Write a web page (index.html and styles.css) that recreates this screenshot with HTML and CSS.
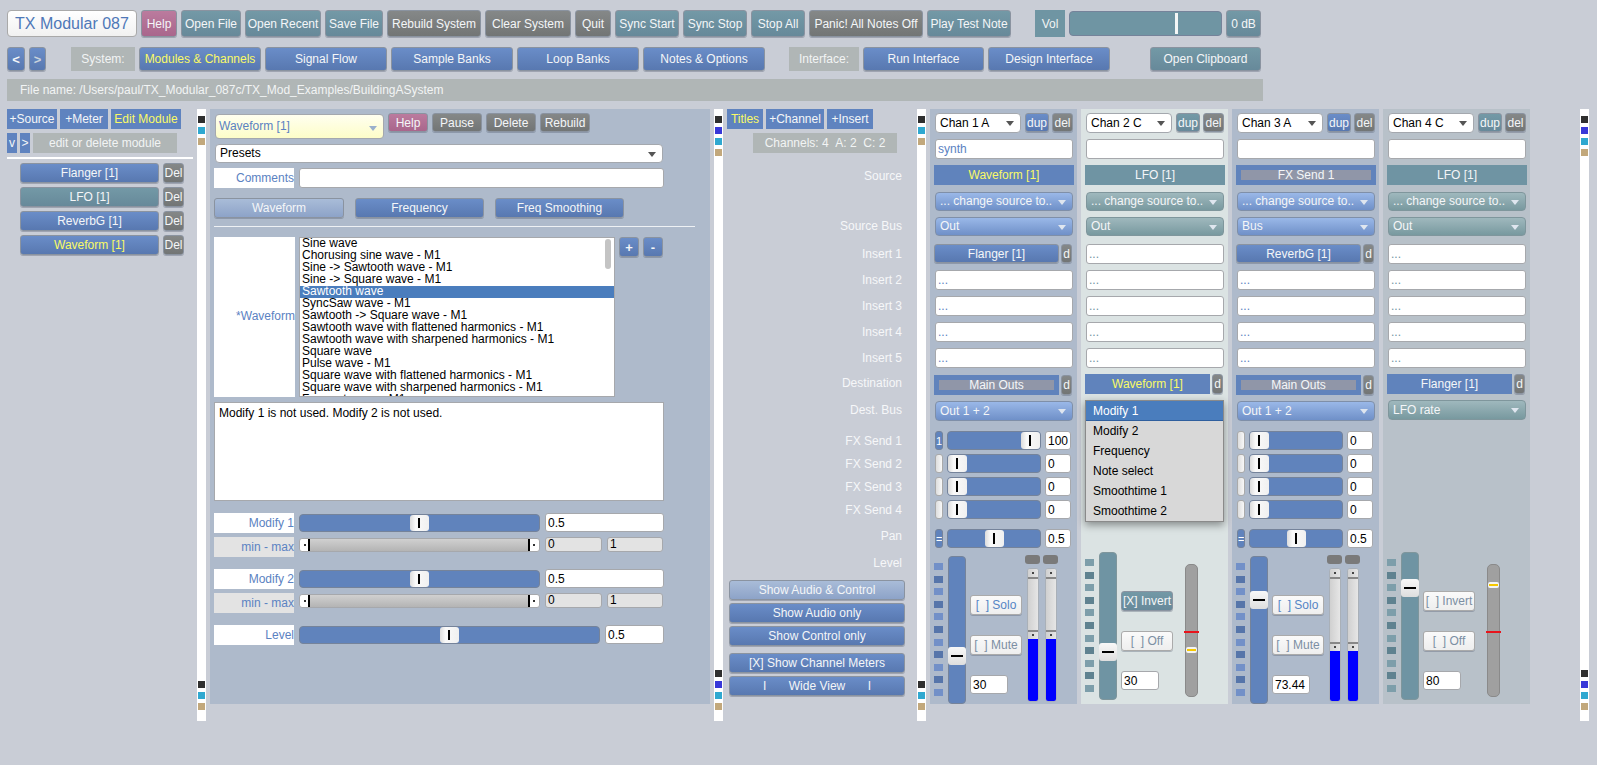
FILE: index.html
```html
<!DOCTYPE html>
<html lang="en">
<head>
    <meta charset="UTF-8">
    <title>TX Modular 087</title>
    <link rel="stylesheet" href="styles.css">
</head>
<body>
    <div class="page">
        <div class="toolbar">
            <div class="title">TX Modular 087</div>
            <button class="btn pink">Help</button>
            <button class="btn teal">Open File</button>
            <button class="btn teal">Open Recent</button>
            <button class="btn teal">Save File</button>
            <button class="btn grey">Rebuild System</button>
            <button class="btn grey">Clear System</button>
            <button class="btn grey">Quit</button>
            <button class="btn teal">Sync Start</button>
            <button class="btn teal">Sync Stop</button>
            <button class="btn teal">Stop All</button>
            <button class="btn grey">Panic! All Notes Off</button>
            <button class="btn teal">Play Test Note</button>
            <span></span>
            <div class="tag teal-tag">Vol</div>
            <div class="slider teal-slider"><i class="vol-thumb"></i></div>
            <button class="btn teal">0 dB</button>
        </div>

        <div class="navbar">
            <button class="btn blue big">&lt;</button>
            <button class="btn blue dim big">&gt;</button>
            <span></span>
            <div class="tag">System:</div>
            <button class="btn blue on">Modules &amp; Channels</button>
            <button class="btn blue">Signal Flow</button>
            <button class="btn blue">Sample Banks</button>
            <button class="btn blue">Loop Banks</button>
            <button class="btn blue">Notes &amp; Options</button>
            <span></span>
            <div class="tag">Interface:</div>
            <button class="btn blue">Run Interface</button>
            <button class="btn blue">Design Interface</button>
            <span></span>
            <button class="btn teal">Open Clipboard</button>
        </div>

        <div class="filebar">File name: /Users/paul/TX_Modular_087c/TX_Mod_Examples/BuildingASystem</div>

        <div class="workspace">
            <div class="modules">
                <div class="flat-row">
                    <div class="flat w50">+Source</div>
                    <div class="flat w48">+Meter</div>
                    <div class="flat w70 on">Edit Module</div>
                </div>
                <div class="flat-row second">
                    <div class="flat w10">v</div>
                    <div class="flat w10">&gt;</div>
                    <div class="tag w144">edit or delete module</div>
                </div>
                <div class="rule"></div>
                <div class="mod-row"><button class="btn blue">Flanger [1]</button><button class="btn grey">Del</button></div>
                <div class="mod-row"><button class="btn teal">LFO [1]</button><button class="btn grey">Del</button></div>
                <div class="mod-row"><button class="btn blue">ReverbG [1]</button><button class="btn grey">Del</button></div>
                <div class="mod-row"><button class="btn blue on">Waveform [1]</button><button class="btn grey">Del</button></div>
            </div>

            <div class="strip">
                <div class="swatches"><i class="c-black"></i><i class="c-cyan"></i><i class="c-tan"></i></div>
                <div class="swatches"><i class="c-black"></i><i class="c-cyan"></i><i class="c-tan"></i></div>
            </div>

            <div class="panel">
                <div class="panel-head">
                    <div class="select pale">Waveform [1]</div>
                    <button class="btn pink">Help</button>
                    <button class="btn grey">Pause</button>
                    <button class="btn grey">Delete</button>
                    <button class="btn grey">Rebuild</button>
                </div>
                <div class="select presets">Presets</div>
                <div class="comment-row">
                    <label class="plabel">Comments</label>
                    <input class="field" value="">
                </div>
                <div class="tabs">
                    <button class="btn blue pale-btn">Waveform</button>
                    <button class="btn blue">Frequency</button>
                    <button class="btn blue">Freq Smoothing</button>
                </div>
                <div class="panel-rule"></div>
                <div class="wave-row">
                    <label class="plabel">*Waveform</label>
                    <div class="listbox">
                        <div>Sine wave</div>
                        <div>Chorusing sine wave - M1</div>
                        <div>Sine -&gt; Sawtooth wave - M1</div>
                        <div>Sine -&gt; Square wave - M1</div>
                        <div class="picked">Sawtooth wave</div>
                        <div>SyncSaw wave - M1</div>
                        <div>Sawtooth -&gt; Square wave - M1</div>
                        <div>Sawtooth wave with flattened harmonics - M1</div>
                        <div>Sawtooth wave with sharpened harmonics - M1</div>
                        <div>Square wave</div>
                        <div>Pulse wave - M1</div>
                        <div>Square wave with flattened harmonics - M1</div>
                        <div>Square wave with sharpened harmonics - M1</div>
                        <div>Formant wave - M1</div>
                        <i class="scroll"></i>
                    </div>
                    <button class="btn blue big">+</button>
                    <button class="btn blue big">-</button>
                </div>
                <div class="notes">Modify 1 is not used. Modify 2 is not used.</div>

                <div class="param first">
                    <label class="plabel">Modify 1</label>
                    <div class="slider" style="--v:.5"><i class="thumb"></i></div>
                    <input class="field" value="0.5">
                </div>
                <div class="minmax">
                    <label class="plabel dim-label">min - max</label>
                    <div class="range"><div class="range-fill"></div></div>
                    <input class="field small" value="0">
                    <input class="field small" value="1">
                </div>
                <div class="param">
                    <label class="plabel">Modify 2</label>
                    <div class="slider" style="--v:.5"><i class="thumb"></i></div>
                    <input class="field" value="0.5">
                </div>
                <div class="minmax">
                    <label class="plabel dim-label">min - max</label>
                    <div class="range"><div class="range-fill"></div></div>
                    <input class="field small" value="0">
                    <input class="field small" value="1">
                </div>
                <div class="param level-param">
                    <label class="plabel">Level</label>
                    <div class="slider" style="--v:.5"><i class="thumb"></i></div>
                    <input class="field" value="0.5">
                </div>
            </div>

            <div class="strip">
                <div class="swatches"><i class="c-black"></i><i class="c-blue"></i><i class="c-cyan"></i><i class="c-tan"></i></div>
                <div class="swatches"><i class="c-black"></i><i class="c-blue"></i><i class="c-cyan"></i><i class="c-tan"></i></div>
            </div>

            <div class="titles">
                <div class="flat-row">
                    <div class="flat w36 on">Titles</div>
                    <div class="flat w58">+Channel</div>
                    <div class="flat w46">+Insert</div>
                </div>
                <div class="tag counts">Channels: 4 &nbsp;A: 2 &nbsp;C: 2</div>
                <div class="row-labels">
                    <span>Source</span>
                    <span>Source Bus</span>
                    <span>Insert 1</span>
                    <span>Insert 2</span>
                    <span>Insert 3</span>
                    <span>Insert 4</span>
                    <span>Insert 5</span>
                    <span>Destination</span>
                    <span>Dest. Bus</span>
                    <span>FX Send 1</span>
                    <span>FX Send 2</span>
                    <span>FX Send 3</span>
                    <span>FX Send 4</span>
                    <span>Pan</span>
                    <span>Level</span>
                </div>
                <div class="view-btns">
                    <button class="btn blue pale-btn">Show Audio &amp; Control</button>
                    <button class="btn blue">Show Audio only</button>
                    <button class="btn blue">Show Control only</button>
                    <button class="btn blue gap-btn">[X] Show Channel Meters</button>
                    <button class="btn blue wide-btn"><span>I</span><span>Wide View</span><span>I</span></button>
                </div>
            </div>

            <div class="strip">
                <div class="swatches"><i class="c-black"></i><i class="c-cyan"></i><i class="c-tan"></i></div>
                <div class="swatches"><i class="c-black"></i><i class="c-cyan"></i><i class="c-tan"></i></div>
            </div>

            <div class="channels">
                <!-- channel 1 -->
                <div class="channel audio">
                    <div class="chan-head">
                        <div class="select">Chan 1 A</div>
                        <button class="btn blue">dup</button>
                        <button class="btn grey">del</button>
                    </div>
                    <input class="field name blue-text" value="synth">
                    <div class="source blue-bar on">Waveform [1]</div>
                    <div class="select blue-select change">... change source to..</div>
                    <div class="select blue-select bus">Out</div>
                    <div class="insert first"><button class="btn blue">Flanger [1]</button><button class="btn grey">d</button></div>
                    <input class="field insert-in" value="...">
                    <input class="field insert-in" value="...">
                    <input class="field insert-in" value="...">
                    <input class="field insert-in" value="...">
                    <div class="dest"><div class="source blue-bar muted">Main Outs</div><button class="btn grey">d</button></div>
                    <div class="select blue-select dest-bus">Out 1 + 2</div>
                    <div class="fx first"><button class="toggle lit">1</button><div class="slider" style="--v:1"><i class="thumb"></i></div><input class="field" value="100"></div>
                    <div class="fx"><button class="toggle"></button><div class="slider" style="--v:0"><i class="thumb"></i></div><input class="field" value="0"></div>
                    <div class="fx"><button class="toggle"></button><div class="slider" style="--v:0"><i class="thumb"></i></div><input class="field" value="0"></div>
                    <div class="fx"><button class="toggle"></button><div class="slider" style="--v:0"><i class="thumb"></i></div><input class="field" value="0"></div>
                    <div class="fx pan"><button class="toggle lit">=</button><div class="slider" style="--v:.5"><i class="thumb"></i></div><input class="field" value="0.5"></div>
                    <div class="level">
                        <div class="leds"><i></i><i></i><i></i><i></i><i></i><i></i><i></i><i></i><i></i><i></i><i></i></div>
                        <div class="vslider" style="--v:.3"><i class="vthumb"></i></div>
                        <div class="level-btns">
                            <button class="btn plain solo">[ &nbsp;] Solo</button>
                            <button class="btn plain">[ &nbsp;] Mute</button>
                            <input class="field" value="30">
                        </div>
                        <div class="vu-pair">
                            <div class="vu"><u></u><div class="vu-bar"><div class="vu-range"></div><div class="vu-fill" style="height:62px"></div></div></div>
                            <div class="vu"><u></u><div class="vu-bar"><div class="vu-range"></div><div class="vu-fill" style="height:62px"></div></div></div>
                        </div>
                    </div>
                </div>

                <!-- channel 2 -->
                <div class="channel control light">
                    <div class="chan-head">
                        <div class="select">Chan 2 C</div>
                        <button class="btn teal">dup</button>
                        <button class="btn grey">del</button>
                    </div>
                    <input class="field name" value="">
                    <div class="source teal-bar">LFO [1]</div>
                    <div class="select teal-select change">... change source to..</div>
                    <div class="select teal-select bus">Out</div>
                    <input class="field insert-in first" value="...">
                    <input class="field insert-in" value="...">
                    <input class="field insert-in" value="...">
                    <input class="field insert-in" value="...">
                    <input class="field insert-in" value="...">
                    <div class="dest"><div class="source blue-bar on">Waveform [1]</div><button class="btn grey">d</button></div>
                    <div class="menu">
                        <div class="picked">Modify 1</div>
                        <div>Modify 2</div>
                        <div>Frequency</div>
                        <div>Note select</div>
                        <div>Smoothtime 1</div>
                        <div>Smoothtime 2</div>
                    </div>
                    <div class="level">
                        <div class="leds teal-leds"><i></i><i></i><i></i><i></i><i></i><i></i><i></i><i></i><i></i><i></i><i></i></div>
                        <div class="vslider teal-v" style="--v:.3"><i class="vthumb"></i></div>
                        <div class="level-btns">
                            <button class="btn teal">[X] Invert</button>
                            <button class="btn plain">[ &nbsp;] Off</button>
                            <input class="field" value="30">
                        </div>
                        <div class="fader"><i class="fader-zero"></i><i class="fader-thumb" style="top:82px"></i></div>
                    </div>
                </div>

                <!-- channel 3 -->
                <div class="channel audio">
                    <div class="chan-head">
                        <div class="select">Chan 3 A</div>
                        <button class="btn blue">dup</button>
                        <button class="btn grey">del</button>
                    </div>
                    <input class="field name" value="">
                    <div class="source blue-bar muted">FX Send 1</div>
                    <div class="select blue-select change">... change source to..</div>
                    <div class="select blue-select bus">Bus</div>
                    <div class="insert first"><button class="btn blue">ReverbG [1]</button><button class="btn grey">d</button></div>
                    <input class="field insert-in" value="...">
                    <input class="field insert-in" value="...">
                    <input class="field insert-in" value="...">
                    <input class="field insert-in" value="...">
                    <div class="dest"><div class="source blue-bar muted">Main Outs</div><button class="btn grey">d</button></div>
                    <div class="select blue-select dest-bus">Out 1 + 2</div>
                    <div class="fx first"><button class="toggle"></button><div class="slider" style="--v:0"><i class="thumb"></i></div><input class="field" value="0"></div>
                    <div class="fx"><button class="toggle"></button><div class="slider" style="--v:0"><i class="thumb"></i></div><input class="field" value="0"></div>
                    <div class="fx"><button class="toggle"></button><div class="slider" style="--v:0"><i class="thumb"></i></div><input class="field" value="0"></div>
                    <div class="fx"><button class="toggle"></button><div class="slider" style="--v:0"><i class="thumb"></i></div><input class="field" value="0"></div>
                    <div class="fx pan"><button class="toggle lit">=</button><div class="slider" style="--v:.5"><i class="thumb"></i></div><input class="field" value="0.5"></div>
                    <div class="level">
                        <div class="leds"><i></i><i></i><i></i><i></i><i></i><i></i><i></i><i></i><i></i><i></i><i></i></div>
                        <div class="vslider" style="--v:.7344"><i class="vthumb"></i></div>
                        <div class="level-btns">
                            <button class="btn plain solo">[ &nbsp;] Solo</button>
                            <button class="btn plain">[ &nbsp;] Mute</button>
                            <input class="field" value="73.44">
                        </div>
                        <div class="vu-pair">
                            <div class="vu"><u></u><div class="vu-bar"><div class="vu-range"></div><div class="vu-fill" style="height:50px"></div></div></div>
                            <div class="vu"><u></u><div class="vu-bar"><div class="vu-range"></div><div class="vu-fill" style="height:50px"></div></div></div>
                        </div>
                    </div>
                </div>

                <!-- channel 4 -->
                <div class="channel control slate">
                    <div class="chan-head">
                        <div class="select">Chan 4 C</div>
                        <button class="btn teal">dup</button>
                        <button class="btn grey">del</button>
                    </div>
                    <input class="field name" value="">
                    <div class="source teal-bar">LFO [1]</div>
                    <div class="select teal-select change">... change source to..</div>
                    <div class="select teal-select bus">Out</div>
                    <input class="field insert-in first" value="...">
                    <input class="field insert-in" value="...">
                    <input class="field insert-in" value="...">
                    <input class="field insert-in" value="...">
                    <input class="field insert-in" value="...">
                    <div class="dest"><div class="source blue-bar">Flanger [1]</div><button class="btn grey">d</button></div>
                    <div class="select teal-select dest-bus">LFO rate</div>
                    <div class="level">
                        <div class="leds teal-leds"><i></i><i></i><i></i><i></i><i></i><i></i><i></i><i></i><i></i><i></i><i></i></div>
                        <div class="vslider teal-v" style="--v:.8"><i class="vthumb"></i></div>
                        <div class="level-btns">
                            <button class="btn plain">[ &nbsp;] Invert</button>
                            <button class="btn plain">[ &nbsp;] Off</button>
                            <input class="field" value="80">
                        </div>
                        <div class="fader"><i class="fader-zero"></i><i class="fader-thumb" style="top:17px"></i></div>
                    </div>
                </div>
            </div>

            <div class="strip far">
                <div class="swatches"><i class="c-black"></i><i class="c-blue"></i><i class="c-cyan"></i><i class="c-tan"></i></div>
                <div class="swatches"><i class="c-black"></i><i class="c-blue"></i><i class="c-cyan"></i><i class="c-tan"></i></div>
            </div>
        </div>
    </div>
</body>
</html>
```
FILE: styles.css
```css
* { box-sizing: border-box; }
html, body { margin: 0; height: 100%; }
body { background: #c9cdd6; font-family: "Liberation Sans", Arial, sans-serif; font-size: 12px; overflow: hidden; }
.page { width: 1597px; height: 765px; padding: 10px 0 0 7px; }
button, input { font-family: inherit; font-size: 12px; margin: 0; }

/* top rows */
.toolbar { display: grid; height: 27px; column-gap: 4px; grid-template-columns: 130px 36px 60px 76px 58px 94px 86px 36px 64px 64px 54px 114px 84px 16px 30px 153px 35px; }
.navbar { display: grid; height: 24px; margin-top: 10px; column-gap: 4px; grid-template-columns: 18px 17px 17px 64px 122px 122px 122px 122px 122px 16px 70px 121px 122px 32px 111px; }
.filebar { width: 1256px; height: 22px; margin-top: 8px; padding-left: 13px; line-height: 22px; background: #b0b6b6; color: #f2f4f4; }
.title { background: linear-gradient(#fff, #f1f1f1); border: 1px solid #a9a9a9; border-radius: 4px; color: #4e78b8; font-size: 16px; line-height: 25px; text-align: center; }

/* buttons */
.btn { padding: 0; border: 1px solid #8a93a0; border-radius: 3px; color: #f4f6f8; white-space: nowrap; overflow: hidden; box-shadow: 0 1px 0 rgba(80,90,110,.35); }
.btn.blue { background: linear-gradient(#6a8dc8, #5878b0); }
.btn.teal { background: linear-gradient(#7399a6, #67899a); }
.btn.grey { background: linear-gradient(#858888, #727575); }
.btn.pink { background: linear-gradient(#bb7b9e, #a9668c); }
.btn.plain { background: linear-gradient(#fafafa, #eeeeee); color: #7c8fa3; border-color: #aaa; }
.btn.plain.solo { color: #5585c5; }
.btn.on, .flat.on, .source.on { color: #fafa66; }
.btn.big { font-size: 13px; font-weight: bold; }
.btn.dim { color: #c9d2dc; }
.btn.pale-btn { background: linear-gradient(#a9bcd8, #8da3c8); }
.tag { background: #b0b6b6; color: #f2f4f4; display: flex; align-items: center; justify-content: center; white-space: nowrap; }
.teal-tag { background: #6f95a3; }

/* sliders */
.slider { position: relative; background: #6083bc; border: 1px solid #75839a; border-radius: 4px; }
.slider .thumb { position: absolute; top: 0; bottom: 0; left: calc((100% - 19px) * var(--v)); width: 19px; background: linear-gradient(to right, #dcdcdc, #fafafa 30%, #f0f0f0); border-radius: 3px; }
.slider .thumb::after { content: ""; position: absolute; left: 8px; top: 3px; bottom: 3px; width: 2px; background: #000; }
.teal-slider { background: #6f95a3; height: 25px; margin-top: 1px; }
.vol-thumb { position: absolute; left: 105px; top: 1px; bottom: 1px; width: 3px; background: #f4f6f6; }

/* workspace */
.workspace { display: flex; align-items: flex-start; margin-top: 8px; height: 612px; }
.strip { display: flex; flex-direction: column; justify-content: space-between; width: 9px; height: 612px; padding: 7px 1px 11px; margin-right: 4px; background: #fff; flex: none; }
.strip.far { margin-left: 50px; }
.swatches { display: flex; flex-direction: column; gap: 4px; }
.swatches i { display: block; width: 7px; height: 7px; }
.c-black { background: #2f2f2f; }
.c-blue { background: #3838d8; }
.c-cyan { background: #2fa8d0; }
.c-tan { background: #c2a87c; }

/* module list */
.modules { width: 186px; margin-right: 4px; flex: none; }
.flat-row { display: flex; gap: 3px; height: 20px; }
.flat-row.second { margin-top: 4px; }
.flat { background: #5f83bf; color: #f4f6f8; display: flex; align-items: center; justify-content: center; white-space: nowrap; }
.w10 { width: 10px; } .w36 { width: 36px; } .w46 { width: 46px; } .w48 { width: 48px; }
.w50 { width: 50px; } .w58 { width: 58px; } .w70 { width: 70px; } .w144 { width: 144px; }
.rule { height: 2px; margin-top: 4px; background: #fff; }
.mod-row { display: grid; grid-template-columns: 139px 21px; column-gap: 4px; height: 20px; margin: 4px 0 0 13px; }

/* module panel */
.panel { width: 500px; height: 595px; margin-right: 4px; padding: 4px 0 0 4px; background: #aebacb; flex: none; }
.panel-head { display: flex; gap: 4px; height: 26px; padding-left: 1px; align-items: flex-start; }
.panel-head .btn { width: 50px; height: 19px; }
.panel-head .btn.pink { width: 40px; }
.select { position: relative; height: 20px; padding-left: 4px; line-height: 18px; background: #fff; border: 1px solid #a4a8ae; border-radius: 4px; color: #000; white-space: nowrap; }
.select::after { content: ""; position: absolute; right: 6px; top: 7px; border: 4px solid transparent; border-top: 5px solid #555; border-bottom: 0; }
.select.pale { width: 169px; height: 25px; margin-top: 1px; line-height: 23px; padding-left: 3px; background: linear-gradient(#fffff0, #fdfdc8); color: #5b82c2; font-size: 12px; }
.select.pale::after { top: 11px; border-top-color: #9ab0cc; }
.presets { width: 448px; height: 19px; margin: 5px 0 0 1px; line-height: 17px; }
.comment-row { display: grid; grid-template-columns: 80px 365px; column-gap: 5px; height: 20px; margin-top: 5px; }
.plabel { display: block; background: #fff; color: #5b82c2; line-height: 20px; text-align: right; white-space: nowrap; }
.dim-label { background: #e3e3e3; }
.field { display: block; width: 100%; height: 100%; padding: 0 2px; background: #fff; border: 1px solid #a6a8ac; border-radius: 3px; color: #000; outline: none; }
.field.small { background: #e3e3e3; height: 15px; padding-bottom: 2px; }
.blue-text { color: #5b82c2; }
.tabs { display: grid; grid-template-columns: 130px 129px 129px; column-gap: 11px; height: 20px; margin-top: 10px; }
.panel-rule { width: 481px; height: 1px; margin-top: 8px; background: #eef1f4; }
.wave-row { display: grid; grid-template-columns: 80px 317px 20px 20px; column-gap: 4px; height: 160px; margin-top: 10px; }
.wave-row .plabel { line-height: 158px; margin-right: -1px; }
.wave-row .listbox { margin-left: 1px; }
.wave-row .btn { height: 20px; }
.listbox { position: relative; height: 160px; overflow: hidden; background: #fff; border: 1px solid #a6a8ac; color: #000; }
.listbox div { height: 12px; padding-left: 2px; line-height: 11px; white-space: nowrap; }
.listbox .picked { background: #4a7dbd; color: #fff; }
.scroll { position: absolute; right: 3px; top: 1px; width: 6px; height: 30px; background: #c4c4c4; border-radius: 3px; }
.notes { width: 450px; height: 99px; margin-top: 5px; padding: 3px 4px; background: #fff; border: 1px solid #a6a8ac; color: #000; }
.param { display: grid; grid-template-columns: 80px 241px 119px; column-gap: 5px; height: 20px; margin-top: 12px; }
.param .slider { margin: 1px 0; }
.param .field { height: 19px; }
.level-param { grid-template-columns: 80px 301px 59px; }
.minmax { display: grid; grid-template-columns: 80px 241px 57px 56px; column-gap: 5px; height: 20px; margin-top: 4px; }
.range { height: 14px; margin-top: 1px; background: radial-gradient(circle, #333 0 1px, transparent 1px) 4px center / 2px 2px no-repeat, radial-gradient(circle, #333 0 1px, transparent 1px) right 4px center / 2px 2px no-repeat, #fff; border: 1px solid #a6a8ac; border-radius: 3px; }
.range-fill { height: 100%; margin: 0 9px 0 8px; background: linear-gradient(#d0d0d0, #b4b4b4); border: solid #000; border-width: 0 2px; }

/* titles column */
.titles { width: 194px; flex: none; padding-left: 4px; margin-left: -4px; }
.counts { width: 144px; height: 20px; margin: 4px 0 0 26px; }
.row-labels { display: grid; grid-template-rows: 50px 28px 26px 26px 26px 26px 25px 27px 31px 23px 23px 23px 26px 27px 20px; margin-top: 13px; padding-right: 15px; text-align: right; color: #f6f7f9; line-height: 20px; }
.view-btns { display: flex; flex-direction: column; gap: 3px; width: 176px; margin: 7px 0 0 2px; }
.view-btns .btn { height: 20px; }
.view-btns .gap-btn { margin-top: 4px; }
.wide-btn { display: flex; justify-content: space-between; align-items: center; padding: 0 33px; }

/* channels */
.channels { display: flex; gap: 4px; width: 600px; flex: none; }
.channel { position: relative; width: 147px; height: 595px; padding: 4px 4px 0 5px; background: #aebacb; flex: none; }
.channel.light { background: #dbe3e3; }
.channel.slate { background: #b8c1c9; }
.chan-head { display: grid; grid-template-columns: 86px 25px 21px; column-gap: 3px; height: 20px; }
.chan-head .btn { height: 19px; }
.chan-head .btn:nth-child(2) { margin-left: 1px; }
.channel .name { height: 20px; margin-top: 6px; }
.source { height: 20px; line-height: 20px; text-align: center; color: #f4f6f8; white-space: nowrap; }
.channel > .source { margin: 6px -1px 0; }
.blue-bar { background: #6083bc; }
.teal-bar { background: #6f94a3; }
.source.muted { background: linear-gradient(#9096a8, #9096a8) center / calc(100% - 10px) 10px no-repeat, #6083bc; }
.select.blue-select { background: linear-gradient(#9ab8e8, #6f90c8); color: #f4f6f8; border-color: #7f8fa8; }
.select.teal-select { background: linear-gradient(#9fb8bd, #78999f); color: #f4f6f8; border-color: #7f969c; }
.select.blue-select::after, .select.teal-select::after { border-top-color: #dfe6ef; }
.change { height: 19px; margin-top: 7px; line-height: 17px; }
.bus { height: 19px; margin-top: 6px; line-height: 17px; }
.insert { display: grid; grid-template-columns: 125px 11px; column-gap: 2px; height: 19px; margin: 8px -1px 0; }
.channel .insert-in { height: 20px; margin-top: 6px; color: #5b82c2; }
.control .insert-in { color: #6f94a3; }
.channel .insert-in.first { margin-top: 8px; }
.channel .insert + .insert-in { margin-top: 7px; }
.dest { display: grid; grid-template-columns: 125px 11px; column-gap: 2px; height: 20px; margin: 7px -1px 0; }
.control .dest { margin-top: 6px; }
.dest-bus { height: 20px; margin-top: 6px; line-height: 18px; }
.fx { display: grid; grid-template-columns: 8px 94px 26px; column-gap: 4px; height: 19px; margin-top: 4px; }
.fx.first { margin-top: 10px; }
.fx.pan { margin-top: 10px; }
.toggle { padding: 0; background: linear-gradient(to right, #dedede, #f8f8f8); border: 1px solid #aaa; border-radius: 3px; color: #fff; font-size: 11px; overflow: hidden; }
.toggle.lit { background: #6083bc; border-color: #75839a; }

/* level block */
.level { display: flex; height: 149px; margin: 7px 0 0 -1px; }
.control .level { margin-top: 132px; }
.control .menu + .level { margin-top: 158px; }
.leds { display: flex; flex-direction: column; gap: 5.6px; width: 9px; padding-top: 8px; flex: none; }
.control .leds { padding-top: 7px; }
.leds i { display: block; height: 7px; background: #7290c8; }
.leds i:nth-child(even) { background: #5675aa; }
.teal-leds i { background: #7d9eaa; }
.teal-leds i:nth-child(even) { background: #5f8290; }
.vslider { position: relative; width: 18px; height: 148px; margin: 1px 0 0 5px; background: #6083bc; border: 1px solid #75839a; border-radius: 4px; flex: none; }
.control .vslider { margin-top: 0; }
.vslider.teal-v { background: #6f94a3; border-color: #7f969c; }
.vthumb { position: absolute; left: -1px; right: -1px; top: calc((100% - 18px) * (1 - var(--v))); height: 18px; background: linear-gradient(#f8f8f8, #dedede); border-radius: 3px; }
.vthumb::after { content: ""; position: absolute; left: 3px; right: 3px; top: 8px; height: 2px; background: #000; }
.level-btns { display: flex; flex-direction: column; width: 52px; margin-left: 4px; padding-top: 40px; flex: none; }
.control .level-btns { padding-top: 39px; }
.level-btns .btn { height: 20px; margin-bottom: 20px; font-size: 12px; }
.level-btns .field { width: 38px; height: 19px; }
.vu-pair { display: flex; gap: 3px; margin-left: 3px; }
.vu { width: 15px; }
.vu u { display: block; height: 9px; background: #7a7a7a; border-radius: 3px; }
.vu-bar { display: flex; flex-direction: column; width: 12px; height: 134px; margin: 4px auto 0; border: 1px solid #a9b0b8; border-radius: 3px; overflow: hidden; background: #dcdcdc; }
.vu-range { position: relative; flex: 1; background: radial-gradient(circle, #444 0 1px, transparent 1px) center 3px / 2px 2px no-repeat, radial-gradient(circle, #444 0 1px, transparent 1px) center bottom 3px / 2px 2px no-repeat, linear-gradient(to right, #d0d0d0, #e6e6e6); }
.vu-range::before, .vu-range::after { content: ""; position: absolute; left: 0; right: 0; height: 2px; background: #888; }
.vu-range::before { top: 8px; }
.vu-range::after { bottom: 7px; }
.vu-fill { background: #0000ff; flex: none; }
.fader { position: relative; width: 13px; height: 133px; margin: 12px 0 0 12px; background: #a0a0a0; border: 1px solid #8a8a8a; border-radius: 5px; flex: none; }
.fader-zero { position: absolute; left: -2px; right: -2px; top: 66px; height: 2px; background: #e8141c; }
.fader-thumb { position: absolute; left: 0; right: 0; height: 6px; background: #f4f4f4; border-radius: 2px; }
.fader-thumb::after { content: ""; position: absolute; left: 1px; right: 1px; top: 2px; height: 2px; background: #f6c800; }

/* open menu over channel 2 */
.menu { position: absolute; left: 4px; top: 291px; width: 139px; height: 122px; background: #d8d8d8; border: 1px solid #8a8a8a; box-shadow: 0 3px 8px rgba(0,0,0,.4); color: #000; line-height: 20px; }
.menu div { height: 20px; padding-left: 7px; }
.menu .picked { background: #4a7dbd; color: #fff; border-bottom: 1px solid #2f5f9e; }
```
